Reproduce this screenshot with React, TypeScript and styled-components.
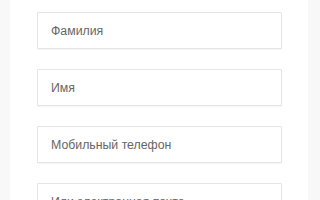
import styled, { createGlobalStyle } from "styled-components";

const GlobalStyle = createGlobalStyle`
  html, body {
    margin: 0;
    padding: 0;
    background: #f8f8f8;
    height: 200px;
    overflow: hidden;
  }
`;

const fields = ["Фамилия", "Имя", "Мобильный телефон", "Или электронная почта"];

export default function App() {
  return (
    <>
      <GlobalStyle />
      <Page>
        <Form>
          {fields.map((f) => (
            <Field key={f} placeholder={f} />
          ))}
        </Form>
      </Page>
    </>
  );
}

const Page = styled.div`
  width: 298px;
  margin-left: 10px;
  min-height: 200px;
  background: #ffffff;
  padding: 12px 0 0 27px;
  box-sizing: border-box;
`;

const Form = styled.form`
  display: flex;
  flex-direction: column;
  gap: 20px;
  width: 245px;
`;

const Field = styled.input`
  box-sizing: border-box;
  height: 37px;
  width: 100%;
  margin: 0;
  padding: 0 0 0 13px;
  border: 1px solid #e4e4e4;
  border-radius: 1px;
  background: #ffffff;
  box-shadow: 0 1px 1px rgba(0, 0, 0, 0.04);
  font-family: "Liberation Sans", Arial, sans-serif;
  font-size: 12.3px;
  color: #555555;
  outline: none;
  &::placeholder {
    color: #666666;
    opacity: 1;
  }
`;
